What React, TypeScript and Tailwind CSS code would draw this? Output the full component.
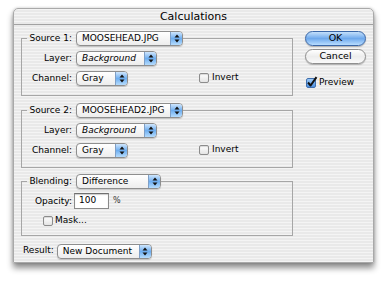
import React from 'react';

const stripes =
  'bg-[repeating-linear-gradient(180deg,#f4f4f4_0px,#f4f4f4_1.5px,#e9e9e9_1.5px,#e9e9e9_3px)]';

const Arrows: React.FC = () => (
  <svg width="6" height="9" viewBox="0 0 6 9">
    <path d="M3 0.5 L5.5 3.5 L0.5 3.5 Z" fill="#111" />
    <path d="M3 8.5 L5.5 5.5 L0.5 5.5 Z" fill="#111" />
  </svg>
);

const Popup: React.FC<{ w: string; italic?: boolean; children: React.ReactNode }> = ({ w, italic, children }) => (
  <div
    className={`${w} flex h-[15px] shrink-0 items-stretch rounded-[4px] border border-[#8e8e8e] bg-gradient-to-b from-white to-[#ededed] shadow-[0_1px_1px_rgba(0,0,0,0.18)]`}
  >
    <span className={`flex-1 pl-[5px] text-[9px] leading-[13px] text-black ${italic ? 'italic' : ''}`}>{children}</span>
    <div className="flex w-[12px] items-center justify-center rounded-r-[3px] border-l border-[#7f9fc6] bg-gradient-to-b from-[#cfe6fc] via-[#6eaef0] to-[#b5dcfd]">
      <Arrows />
    </div>
  </div>
);

const Checkbox: React.FC<{ checked?: boolean }> = ({ checked }) =>
  checked ? (
    <div className="relative h-[10px] w-[10px] shrink-0 rounded-[2px] border border-[#3f6fae] bg-gradient-to-b from-[#9ccaf7] to-[#4c8fe0]">
      <svg className="absolute -left-[1px] -top-[3px]" width="12" height="12" viewBox="0 0 12 12">
        <path d="M2 6.5 L4.6 9.5 L10.5 1.2" stroke="#111" strokeWidth="2" fill="none" strokeLinejoin="round" />
      </svg>
    </div>
  ) : (
    <div className="h-[10px] w-[10px] shrink-0 rounded-[2px] border border-[#8c8c8c] bg-gradient-to-b from-white to-[#e4e4e4] shadow-[inset_0_1px_1px_rgba(0,0,0,0.15)]" />
  );

const Label: React.FC<{ w: string; children: React.ReactNode }> = ({ w, children }) => (
  <span className={`${w} shrink-0 text-right text-[9px] leading-[16px] text-black`}>{children}</span>
);

const Line: React.FC<{ w?: string }> = ({ w = 'flex-1' }) => (
  <div className={`${w} mt-[8px] h-px self-start bg-[#a6a6a6]`} />
);

// group box whose top line is broken by the header row
const Group: React.FC<{ header: React.ReactNode; pb: string; children: React.ReactNode }> = ({ header, pb, children }) => (
  <div className="flex flex-col">
    <div className="relative z-10 flex h-[16px] items-center">{header}</div>
    <div className={`-mt-[8px] flex flex-col gap-[4px] border-x border-b border-[#a6a6a6] pt-[12px] ${pb}`}>{children}</div>
  </div>
);

const SourceGroup: React.FC<{ n: number; file: string }> = ({ n, file }) => (
  <Group
    pb="pb-[9px]"
    header={
      <>
        <Line w="w-[6px]" />
        <Label w="w-[45px]">Source {n}:</Label>
        <div className="ml-[4px]">
          <Popup w="w-[107px]">{file}</Popup>
        </div>
        <Line />
      </>
    }
  >
    <div className="flex h-[16px] items-center">
      <Label w="w-[50px]">Layer:</Label>
      <div className="ml-[4px]">
        <Popup w="w-[81px]" italic>
          Background
        </Popup>
      </div>
    </div>
    <div className="flex h-[16px] items-center">
      <Label w="w-[50px]">Channel:</Label>
      <div className="ml-[4px]">
        <Popup w="w-[52px]">Gray</Popup>
      </div>
      <div className="ml-[71px] flex items-center gap-[3px]">
        <Checkbox />
        <span className="text-[9px] text-black">Invert</span>
      </div>
    </div>
  </Group>
);

const AquaButton: React.FC<{ primary?: boolean; children: React.ReactNode }> = ({ primary, children }) => (
  <div
    className={`flex h-[15px] w-[61px] items-center justify-center rounded-full border text-[9.5px] text-black shadow-[0_1px_1px_rgba(0,0,0,0.25)] ${
      primary
        ? 'border-[#3a66a6] bg-gradient-to-b from-[#c4e0fb] via-[#6fa9ec] to-[#b8ddff]'
        : 'border-[#8f8f8f] bg-gradient-to-b from-white via-[#ededed] to-[#fafafa]'
    }`}
  >
    {children}
  </div>
);

export default function App() {
  return (
    <div className="h-[283px] w-[390px] overflow-hidden bg-white pl-[13px] pt-[8px] font-['DejaVu_Sans',sans-serif]">
      <div className={`flex h-[255px] w-[361px] flex-col rounded-t-[5px] border border-[#a9a9a9] ${stripes} shadow-[0_5px_6px_rgba(0,0,0,0.45),0_0_3px_rgba(0,0,0,0.2)]`}>
        <div className="flex h-[16px] items-center justify-center border-b border-[#a2a2a2] text-[11px] leading-none text-black">
          Calculations
        </div>
        <div className="flex px-[7px] pt-[5px]">
          <div className="flex w-[272px] flex-col">
            <SourceGroup n={1} file="MOOSEHEAD.JPG" />
            <div className="h-[6px]" />
            <SourceGroup n={2} file="MOOSEHEAD2.JPG" />
            <div className="h-[5px]" />
            <Group
              pb="pb-[6px]"
              header={
                <>
                  <Line w="w-[6px]" />
                  <Label w="w-[45px]">Blending:</Label>
                  <div className="ml-[4px]">
                    <Popup w="w-[85px]">Difference</Popup>
                  </div>
                  <Line />
                </>
              }
            >
              <div className="flex h-[16px] items-center">
                <Label w="w-[50px]">Opacity:</Label>
                <div className="ml-[2px] flex h-[16px] w-[35px] items-center border border-[#8a8a8a] border-t-[#6f6f6f] bg-white pl-[4px] text-[9px] text-black shadow-[inset_0_1px_1px_rgba(0,0,0,0.2)]">
                  100
                </div>
                <span className="ml-[4px] text-[8px] text-[#333]">%</span>
              </div>
              <div className="flex h-[16px] items-center pl-[21px]">
                <Checkbox />
                <span className="ml-[2px] text-[9px] text-black">Mask...</span>
              </div>
            </Group>
            <div className="mt-[7px] flex h-[16px] items-center pl-[2px]">
              <span className="text-[9px] text-black">Result:</span>
              <div className="ml-[3px]">
                <Popup w="w-[95px]">New Document</Popup>
              </div>
            </div>
          </div>
          <div className="ml-[12px] flex flex-col pt-[1px]">
            <AquaButton primary>OK</AquaButton>
            <div className="h-[3px]" />
            <AquaButton>Cancel</AquaButton>
            <div className="mt-[12px] flex items-center gap-[3px] pl-[1px]">
              <Checkbox checked />
              <span className="text-[9px] text-black">Preview</span>
            </div>
          </div>
        </div>
      </div>
    </div>
  );
}
